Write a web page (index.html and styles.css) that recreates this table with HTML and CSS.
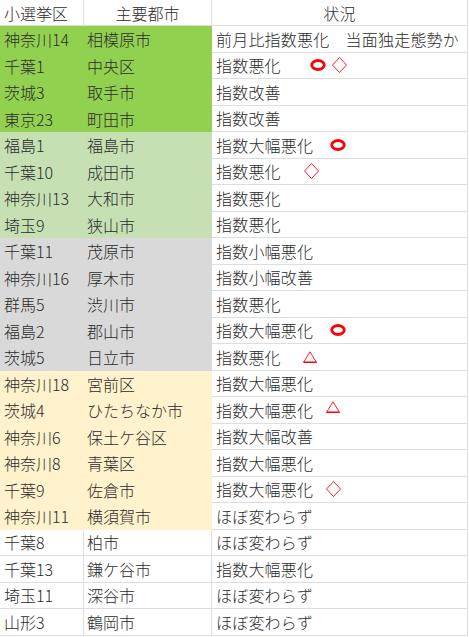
FILE: index.html
```html
<!DOCTYPE html>
<html lang="ja">
<head>
<meta charset="utf-8">
<link rel="stylesheet" href="styles.css">
</head>
<body>
<div class="sheet">
  <div class="c c1 hd">小選挙区</div><div class="c c2 hd center">主要都市</div><div class="c c3 hd center">状況</div>

  <div class="c c1 g1">神奈川14</div><div class="c c2 g1">相模原市</div><div class="c c3">前月比指数悪化　当面独走態勢か</div>
  <div class="c c1 g1">千葉1</div><div class="c c2 g1">中央区</div><div class="c c3">指数悪化<span class="mk m29"><svg class="circ" viewBox="0 0 16 12"><ellipse cx="8" cy="6" rx="6.3" ry="4.5"/></svg></span><span class="mk m6"><svg class="dia" viewBox="0 0 15 16"><polygon points="7.5,0.5 14.5,8 7.5,15.5 0.5,8"/></svg></span></div>
  <div class="c c1 g1">茨城3</div><div class="c c2 g1">取手市</div><div class="c c3">指数改善</div>
  <div class="c c1 g1">東京23</div><div class="c c2 g1">町田市</div><div class="c c3">指数改善</div>

  <div class="c c1 g2">福島1</div><div class="c c2 g2">福島市</div><div class="c c3">指数大幅悪化<span class="mk m17"><svg class="circ" viewBox="0 0 16 12"><ellipse cx="8" cy="6" rx="6.3" ry="4.5"/></svg></span></div>
  <div class="c c1 g2">千葉10</div><div class="c c2 g2">成田市</div><div class="c c3">指数悪化<span class="mk m23"><svg class="dia" viewBox="0 0 15 16"><polygon points="7.5,0.5 14.5,8 7.5,15.5 0.5,8"/></svg></span></div>
  <div class="c c1 g2">神奈川13</div><div class="c c2 g2">大和市</div><div class="c c3">指数悪化</div>
  <div class="c c1 g2">埼玉9</div><div class="c c2 g2">狭山市</div><div class="c c3">指数悪化</div>

  <div class="c c1 g3">千葉11</div><div class="c c2 g3">茂原市</div><div class="c c3">指数小幅悪化</div>
  <div class="c c1 g3">神奈川16</div><div class="c c2 g3">厚木市</div><div class="c c3">指数小幅改善</div>
  <div class="c c1 g3">群馬5</div><div class="c c2 g3">渋川市</div><div class="c c3">指数悪化</div>
  <div class="c c1 g3">福島2</div><div class="c c2 g3">郡山市</div><div class="c c3">指数大幅悪化<span class="mk m17"><svg class="circ" viewBox="0 0 16 12"><ellipse cx="8" cy="6" rx="6.3" ry="4.5"/></svg></span></div>
  <div class="c c1 g3">茨城5</div><div class="c c2 g3">日立市</div><div class="c c3">指数悪化<span class="mk m22"><svg class="tri" viewBox="0 0 14 12"><polygon points="7,0.8 13.4,11.3 0.6,11.3"/><line x1="0.5" y1="11.3" x2="13.5" y2="11.3"/></svg></span></div>

  <div class="c c1 g4">神奈川18</div><div class="c c2 g4">宮前区</div><div class="c c3">指数大幅悪化</div>
  <div class="c c1 g4">茨城4</div><div class="c c2 g4">ひたちなか市</div><div class="c c3">指数大幅悪化<span class="mk m13 up"><svg class="tri" viewBox="0 0 14 12"><polygon points="7,0.8 13.4,11.3 0.6,11.3"/><line x1="0.5" y1="11.3" x2="13.5" y2="11.3"/></svg></span></div>
  <div class="c c1 g4">神奈川6</div><div class="c c2 g4">保土ケ谷区</div><div class="c c3">指数大幅改善</div>
  <div class="c c1 g4">神奈川8</div><div class="c c2 g4">青葉区</div><div class="c c3">指数大幅悪化</div>
  <div class="c c1 g4">千葉9</div><div class="c c2 g4">佐倉市</div><div class="c c3">指数大幅悪化<span class="mk m13"><svg class="dia" viewBox="0 0 15 16"><polygon points="7.5,0.5 14.5,8 7.5,15.5 0.5,8"/></svg></span></div>
  <div class="c c1 g4">神奈川11</div><div class="c c2 g4">横須賀市</div><div class="c c3">ほぼ変わらず</div>

  <div class="c c1">千葉8</div><div class="c c2">柏市</div><div class="c c3">ほぼ変わらず</div>
  <div class="c c1">千葉13</div><div class="c c2">鎌ケ谷市</div><div class="c c3">指数大幅悪化</div>
  <div class="c c1">埼玉11</div><div class="c c2">深谷市</div><div class="c c3">ほぼ変わらず</div>
  <div class="c c1">山形3</div><div class="c c2">鶴岡市</div><div class="c c3">ほぼ変わらず</div>
</div>
</body>
</html>
```

FILE: styles.css
```css
html, body {
  margin: 0;
  padding: 0;
  background: #ffffff;
}

body {
  font-family: "Noto Sans CJK JP", "Noto Sans", sans-serif;
  font-size: 16px;
  font-weight: 300;
  color: #2b2b2b;
}

.sheet {
  display: grid;
  grid-template-columns: 84px 128px 256px;
  grid-template-rows: 26px repeat(23, 26.5px);
  width: 468px;
}

.c {
  box-sizing: border-box;
  display: flex;
  align-items: center;
  white-space: nowrap;
  overflow: visible;
  border-right: 1px solid #dedede;
  border-bottom: 1px solid #dedede;
  line-height: 1;
}

.c1 { padding-left: 4px; }
.c2 { padding-left: 3px; }
.c3 { padding-left: 4px; letter-spacing: 0.2px; }

.center { justify-content: center; padding-left: 0; }

.g1, .g2, .g3, .g4 { border-color: transparent; border-width: 0; }
.g1 { background: #92d050; }
.g2 { background: #c6e0b4; }
.g3 { background: #d9d9d9; }
.g4 { background: #fff2cc; }

.mk {
  display: inline-flex;
  align-items: center;
}
.m6 { margin-left: 6px; }
.m13 { margin-left: 13px; }
.m17 { margin-left: 17px; }
.m22 { margin-left: 22px; }
.m23 { margin-left: 23px; }
.m29 { margin-left: 29px; }
.up { position: relative; top: -3px; }

.circ { width: 16px; height: 12px; }
.circ ellipse { fill: none; stroke: #ff0000; stroke-width: 2.8; }

.dia { width: 15px; height: 16px; }
.dia polygon { fill: none; stroke: #ff2020; stroke-width: 1; }

.tri { width: 14px; height: 12px; }
.tri polygon { fill: none; stroke: #ff2020; stroke-width: 1; }
.tri line { stroke: #ff0000; stroke-width: 1.4; }
```
